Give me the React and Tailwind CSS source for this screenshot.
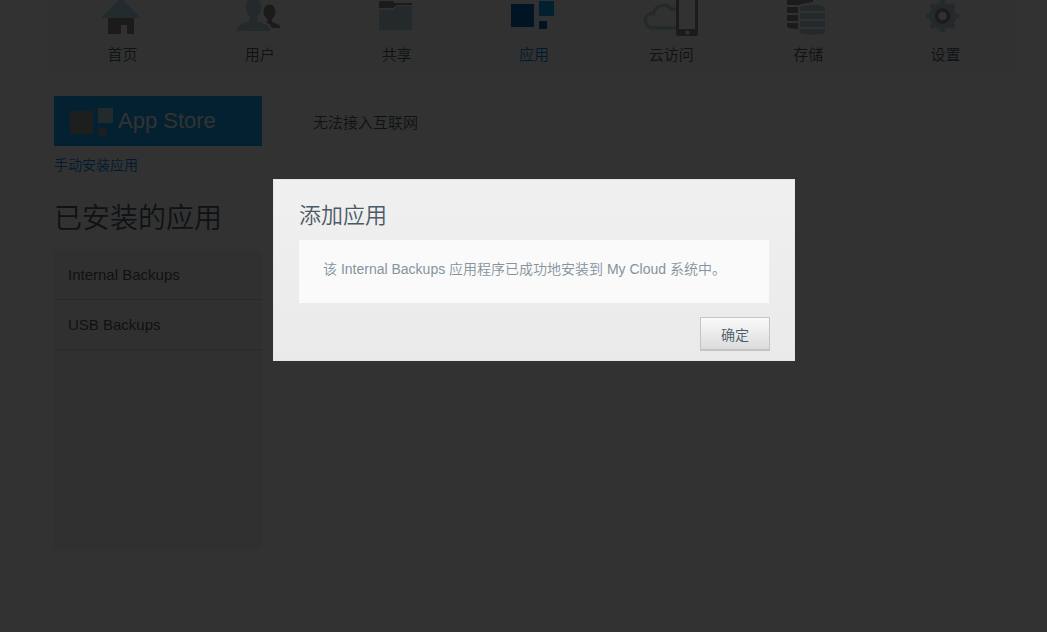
import clsx from 'clsx';

const HomeIcon = () => (
  <>
    <path d="M32 -2L52 18H12z" fill="#b4d7e4" />
    <path d="M19 18h26v16h-7v-9h-6v9H19z" fill="#86898c" />
  </>
);

const UsersIcon = () => (
  <>
    <path
      d="M43.500 4.500c3.500 0 6 3 6 7.500 0 3-1.500 5.500-3.500 7v2.500c1.500 2 8.500 2 8.500 6.500H46c-1-3-3.500-4.500-6-6l1.500-1.500V19c-2.500-1.500-4-4-4-7 0-4.500 2.500-7.500 6-7.500z"
      fill="#86898c"
    />
    <path
      d="M27.500 -2c5 0 8 3.500 8 9 0 4-2 7.500-4.500 9.500v3.500c2 3.500 13 2.500 13 11H10.500c0-8.500 11.500-7.500 13.500-11v-3.500c-2.500-2-4.500-5.500-4.500-9.500 0-5.500 3-9 8-9z"
      fill="#b4d0d9"
    />
  </>
);

const SharesIcon = () => (
  <>
    <path d="M16 1h14l2 2h17v2H34l-4 3H16z" fill="#86898c" />
    <path d="M16 10h14.500l3.500-4h15v24H16z" fill="#b4d0d9" />
  </>
);

const AppsIcon = () => (
  <>
    <path d="M11 4h23v23H11z" fill="#0066af" />
    <path d="M39 1h15v15H39z" fill="#0aa2ee" />
    <path d="M39 21h8v8h-8z" fill="#0066af" />
  </>
);

const CloudIcon = () => (
  <>
    <path
      d="M40 28H14.500a7.500 7.500 0 0 1 -1 -14.500c1-.2 2 0 3 .5a10 10 0 0 1 18 -4.500c2-1 4-.7 6 .5"
      fill="none"
      stroke="#b4d0d9"
      strokeWidth="3.500"
    />
    <path d="M39 -4h22v38a2 2 0 0 1 -2 2H41a2 2 0 0 1 -2 -2z" fill="#86898c" />
    <path d="M42 -4h16v33H42z" fill="#fafafa" />
    <circle cx="50.500" cy="32.500" r="2" fill="#fafafa" />
  </>
);

const StorageIcon = () => (
  <>
    <path d="M13 -2h26v4c-4 1-9 1-14 3H13z" fill="#86898c" />
    <path d="M13 7h11v6H13zM13 15h11v6H13zM13 23h11v6c-5 0-9-1-11-2z" fill="#86898c" />
    <path
      d="M26 7c4-3 21-3 25 0v4H26zM26 13h25v6H26zM26 21h25v6H26zM26 29h25v4c-4 2.500-21 2.500-25 0z"
      fill="#b4d0d9"
    />
  </>
);

const SettingsIcon = () => (
  <>
    <circle cx="31.500" cy="16" r="13.500" fill="#b4d0d9" />
    {[0, 45, 90, 135].map((angle) => (
      <path
        key={angle}
        d="M29 -0.500h5v33h-5z"
        transform={`rotate(${angle} 31.500 16)`}
        fill="#b4d0d9"
      />
    ))}
    <circle cx="31.500" cy="16" r="6" fill="#fafafa" stroke="#86898c" strokeWidth="3.500" />
  </>
);

const navItems = [
  { label: '首页', icon: HomeIcon },
  { label: '用户', icon: UsersIcon },
  { label: '共享', icon: SharesIcon },
  { label: '应用', icon: AppsIcon, active: true },
  { label: '云访问', icon: CloudIcon },
  { label: '存储', icon: StorageIcon },
  { label: '设置', icon: SettingsIcon },
];

const installedApps = ['Internal Backups', 'USB Backups'];

const NavBar = () => (
  <nav className="grid grid-cols-7 border-b border-white bg-[#f5f5f5] pb-[7px]">
    {navItems.map(({ label, icon: Icon, active }) => (
      <a
        key={label}
        href="#"
        className={clsx(
          'flex flex-col items-center text-[15px] leading-6',
          active ? 'text-[#0088e8]' : 'text-[#4b5a68]'
        )}
      >
        <svg className="mb-px" width="68" height="42" viewBox="0 0 68 42" aria-hidden="true">
          <Icon />
        </svg>
        {label}
      </a>
    ))}
  </nav>
);

const Sidebar = () => (
  <aside className="w-52 shrink-0">
    <button
      type="button"
      className="flex h-[50px] w-full items-center gap-1 bg-[#0fa5f0] pb-px pl-4 text-[22px] text-[#fafafa]"
    >
      <svg width="44" height="30" viewBox="0 0 44 30" aria-hidden="true">
        <path d="M0 5h23v23H0z" fill="#919496" />
        <path d="M28 2h15v15H28z" fill="#b4d0d9" />
        <path d="M28 22h8v8h-8z" fill="#919496" />
      </svg>
      App Store
    </button>
    <a href="#" className="mt-[7px] block text-sm leading-6 text-[#0088e8]">
      手动安装应用
    </a>
    <h1 className="mt-[22px] text-[28px] leading-10 text-[#4b5a68]">已安装的应用</h1>
    <ul className="mt-[11px] h-[300px] bg-[#f0f0f0]">
      {installedApps.map((name) => (
        <li key={name} className="border-b border-[#cacaca]">
          <button
            type="button"
            className="h-[49px] w-full px-[14px] pt-[2px] text-left text-[15px] text-[#4b5a68]"
          >
            {name}
          </button>
        </li>
      ))}
    </ul>
  </aside>
);

const AddAppDialog = () => (
  <div className="absolute inset-0 bg-black/80 pt-[179px] pr-[33px] pl-[54px]">
    <div
      role="dialog"
      aria-modal="true"
      aria-labelledby="dialog-title"
      className="mx-auto max-w-[522px] border border-[#e6e6e6] bg-linear-to-b from-[#f0f0f0] to-[#eaeaea] pt-4 pr-6 pb-[9px] pl-[25px]"
    >
      <h2 id="dialog-title" className="text-[22px] leading-10 text-[#4b5a68]">
        添加应用
      </h2>
      <p className="mt-1 mr-px bg-[#fafafa] px-6 pt-[17px] pb-[22px] text-sm leading-6 text-[#85939c]">
        该 Internal Backups 应用程序已成功地安装到 My Cloud 系统中。
      </p>
      <div className="mt-[14px] flex justify-end">
        <button
          type="button"
          className="h-[34px] w-[70px] border border-b-2 border-[#c4c4c4] bg-linear-to-b from-[#fafafa] to-[#dcdcdc] pt-[2px] text-sm text-[#4b5a68]"
        >
          确定
        </button>
      </div>
    </div>
  </div>
);

const App = () => (
  <div className="relative min-h-screen overflow-hidden bg-[#fafafa] font-['Liberation_Sans','Noto_Sans_CJK_SC',sans-serif] font-[350]">
    <div className="pr-[33px] pl-[54px]">
      <NavBar />
      <div className="mt-[21px] flex gap-[51px]">
        <Sidebar />
        <main className="pt-[15px] text-[15px] leading-6 text-[#4b5a68]">无法接入互联网</main>
      </div>
    </div>
    <AddAppDialog />
  </div>
);

export default App;
